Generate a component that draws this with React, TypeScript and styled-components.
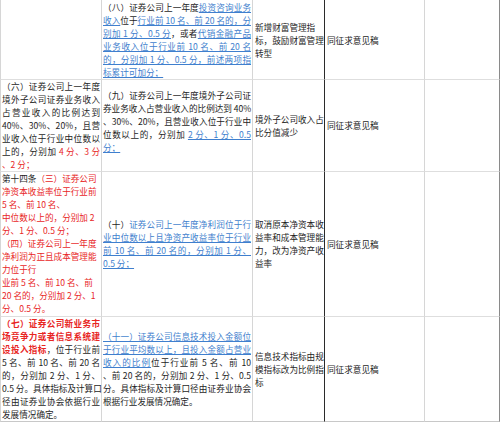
import styled, { createGlobalStyle } from "styled-components";

const GlobalStyle = createGlobalStyle`
  html, body {
    margin: 0;
    padding: 0;
    background: #ffffff;
  }
  body {
    font-family: "Noto Sans CJK SC", "Noto Sans", sans-serif;
  }
`;

const Sheet = styled.div`
  display: grid;
  grid-template-columns: 102px 151px 72px 100px 75px;
  width: 500px;
  font-size: 8.6px;
  line-height: 13px;
  color: #1e1e1e;
`;

type Col = 1 | 2 | 3 | 4 | 5;

const rightBorder: Record<Col, string> = {
  1: "1px solid #d6d6d6",
  2: "1px solid #d6d6d6",
  3: "1px solid #2b2b2b",
  4: "1px solid #d6d6d6",
  5: "1px solid #8a8a8a",
};

// $top / $bottom: the small extra room some rows have above or below their lines
const Cell = styled.div<{ $col: Col; $last?: boolean; $top?: number; $bottom?: number }>`
  display: flex;
  flex-direction: column;
  justify-content: center;
  box-sizing: border-box;
  min-width: 0;
  padding-top: ${(p) => p.$top ?? 0}px;
  padding-bottom: ${(p) => p.$bottom ?? 0}px;
  padding-left: ${(p) => (p.$col === 3 || p.$col === 4 ? 2 : 1)}px;
  padding-right: ${(p) => (p.$col === 3 || p.$col === 4 ? 0 : 1)}px;
  border-left: ${(p) => (p.$col === 1 ? "1px solid #d6d6d6" : "none")};
  border-right: ${(p) => rightBorder[p.$col]};
  border-bottom: 1px solid ${(p) => (p.$last ? "#c8c8c8" : "#dedede")};
`;

const Line = styled.span<{ $fill?: boolean }>`
  display: block;
  white-space: nowrap;
  text-align: ${(p) => (p.$fill ? "justify" : "left")};
  text-align-last: ${(p) => (p.$fill ? "justify" : "auto")};
`;

const Red = styled.span<{ $bold?: boolean }>`
  color: #e8261f;
  font-weight: ${(p) => (p.$bold ? 700 : 400)};
`;

const Blue = styled.span`
  color: #3f7fce;
`;

const Link = styled(Blue)`
  text-decoration: underline;
  text-decoration-thickness: 1px;
  text-underline-offset: 1px;
`;

const Note = styled.span`
  display: block;
`;

function Status() {
  return <Note>同征求意见稿</Note>;
}

export default function App() {
  return (
    <>
      <GlobalStyle />
      <Sheet>
        {/* 投资咨询 / 代销 */}
        <Cell $col={1} $top={1} />
        <Cell $col={2} $top={1}>
          <Line $fill>
            （八）证券公司上一年度<Link>投资咨询业务</Link>
          </Line>
          <Line $fill>
            <Link>收入</Link>位于<Link>行业前 10 名、前 20 名的，分</Link>
          </Line>
          <Line $fill>
            <Link>别加 1 分、0.5 分</Link>，或者<Link>代销金融产品</Link>
          </Line>
          <Line $fill>
            <Link>业务收入位于行业前 10 名、前 20 名</Link>
          </Line>
          <Line $fill>
            <Link>的，分别加 1 分、0.5 分，前述两项指</Link>
          </Line>
          <Line>
            <Link>标累计可加分；</Link>
          </Line>
        </Cell>
        <Cell $col={3} $top={1}>
          新增财富管理指标，鼓励财富管理转型
        </Cell>
        <Cell $col={4} $top={1}>
          <Status />
        </Cell>
        <Cell $col={5} $top={1} />

        {/* 境外子公司 */}
        <Cell $col={1}>
          <Line $fill>（六）证券公司上一年度</Line>
          <Line $fill>境外子公司证券业务收入</Line>
          <Line $fill>占营业收入的比例达到</Line>
          <Line $fill>40%、30%、20%，且营</Line>
          <Line $fill>业收入位于行业中位数以</Line>
          <Line $fill>
            上的，分别加 <Red>4 分、3 分</Red>
          </Line>
          <Line>
            <Red>、2 分；</Red>
          </Line>
        </Cell>
        <Cell $col={2} $bottom={8}>
          <Line $fill>（九）证券公司上一年度境外子公司证</Line>
          <Line $fill>券业务收入占营业收入的比例达到 40%</Line>
          <Line $fill>、30%、20%，且营业收入位于行业中</Line>
          <Line $fill>
            位数以上的，分别加 <Link>2 分、1 分、0.5</Link>
          </Line>
          <Line>
            <Link>分；</Link>
          </Line>
        </Cell>
        <Cell $col={3}>境外子公司收入占比分值减少</Cell>
        <Cell $col={4}>
          <Status />
        </Cell>
        <Cell $col={5} />

        {/* 净资产收益率 */}
        <Cell $col={1} $bottom={1}>
          <Line>
            第十四条<Red>（三）证券公司</Red>
          </Line>
          <Line>
            <Red>净资本收益率位于行业前</Red>
          </Line>
          <Line>
            <Red>5 名、前 10 名、</Red>
          </Line>
          <Line>
            <Red>中位数以上的，分别加 2</Red>
          </Line>
          <Line>
            <Red>分、1 分、0.5 分；</Red>
          </Line>
          <Line>
            <Red>（四）证券公司上一年度</Red>
          </Line>
          <Line>
            <Red>净利润为正且成本管理能</Red>
          </Line>
          <Line>
            <Red>力位于行</Red>
          </Line>
          <Line>
            <Red>业前 5 名、前 10 名、前</Red>
          </Line>
          <Line>
            <Red>20 名的，分别加 2 分、1</Red>
          </Line>
          <Line>
            <Red>分、0.5 分。</Red>
          </Line>
        </Cell>
        <Cell $col={2}>
          <Line $fill>
            （十）<Blue>证券公司上一年度净利润位于行</Blue>
          </Line>
          <Line $fill>
            <Link>业中位数以上且净资产收益率位于行业</Link>
          </Line>
          <Line $fill>
            <Link>前 10 名、前 20 名的，分别加 1 分、</Link>
          </Line>
          <Line>
            <Link>0.5 分；</Link>
          </Line>
        </Cell>
        <Cell $col={3}>取消原本净资本收益率和成本管理能力，改为净资产收益率</Cell>
        <Cell $col={4}>
          <Status />
        </Cell>
        <Cell $col={5} />

        {/* 信息技术投入 */}
        <Cell $col={1} $last>
          <Line $fill>
            <Red $bold>（七）证券公司新业务市</Red>
          </Line>
          <Line $fill>
            <Red $bold>场竞争力或者信息系统建</Red>
          </Line>
          <Line $fill>
            <Red $bold>设投入指标</Red>，位于行业前
          </Line>
          <Line $fill>5 名、前 10 名、前 20 名</Line>
          <Line $fill>的，分别加 2 分、1 分、</Line>
          <Line $fill>0.5 分。具体指标及计算口</Line>
          <Line $fill>径由证券业协会依据行业</Line>
          <Line>发展情况确定。</Line>
        </Cell>
        <Cell $col={2} $last>
          <Line $fill>
            <Link>（十一）证券公司信息技术投入金额位</Link>
          </Line>
          <Line $fill>
            <Link>于行业平均数以上，且投入金额占营业</Link>
          </Line>
          <Line $fill>
            <Link>收入的比例</Link>位于行业前 5 名、前 10
          </Line>
          <Line $fill>、前 20 名的，分别加 2 分、1 分、0.5</Line>
          <Line $fill>分。具体指标及计算口径由证券业协会</Line>
          <Line>根据行业发展情况确定。</Line>
        </Cell>
        <Cell $col={3} $last>
          信息技术指标由规模指标改为比例指标
        </Cell>
        <Cell $col={4} $last>
          <Status />
        </Cell>
        <Cell $col={5} $last />
      </Sheet>
    </>
  );
}
